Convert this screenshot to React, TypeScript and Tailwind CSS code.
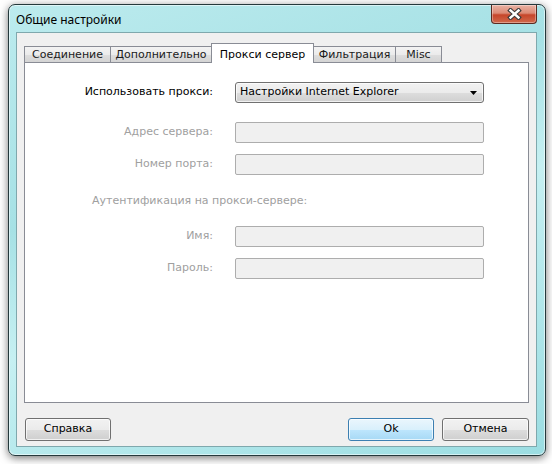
import React from 'react';

const body = { fontFamily: '"DejaVu Sans", Verdana, sans-serif' };

type TabDef = { label: string; w: string; active?: boolean };

const tabs: TabDef[] = [
  { label: 'Соединение', w: 'w-[87px]' },
  { label: 'Дополнительно', w: 'w-[102px]' },
  { label: 'Прокси сервер', w: 'w-[103px]', active: true },
  { label: 'Фильтрация', w: 'w-[83px]' },
  { label: 'Misc', w: 'w-[47px]' },
];

const CloseGlyph = () => (
  <svg width="15" height="12" viewBox="0 0 15 12">
    <path d="M3.5 2.5 L11.5 9.5 M11.5 2.5 L3.5 9.5" stroke="#3a3a3a" strokeWidth="4.6" strokeLinecap="square" />
    <path d="M3.5 2.5 L11.5 9.5 M11.5 2.5 L3.5 9.5" stroke="#ffffff" strokeWidth="2.4" strokeLinecap="square" />
  </svg>
);

const Field = ({ label }: { label: string }) => (
  <div className="flex items-center">
    <div className="w-[188px] text-right text-[#a0a0a0]">{label}</div>
    <div className="ml-[22px] w-[249px] h-[21px] rounded-[2px] border border-[#adadad] bg-[#f0f0f0]" />
  </div>
);

const Button = ({ label, primary }: { label: string; primary?: boolean }) => (
  <button
    className={`h-[23px] rounded-[3px] border text-[11px] text-black shadow-[inset_0_0_0_1px_rgba(255,255,255,0.7)] ${
      primary
        ? 'border-[#3c7fb1] bg-[linear-gradient(180deg,#eaf6fd_0%,#d9f0fc_50%,#bee6fd_51%,#a7d9f5_100%)]'
        : 'border-[#707070] bg-[linear-gradient(180deg,#f2f2f2_0%,#ebebeb_50%,#dddddd_51%,#cfcfcf_100%)]'
    }`}
    style={body}
  >
    {label}
  </button>
);

export default function App() {
  return (
    <div className="w-[552px] h-[464px] bg-white overflow-hidden pt-[4px] pl-[8px]" style={body}>
      <div className="w-[538px] h-[452px] rounded-[7px] border border-[#25393c] bg-[linear-gradient(160deg,#bcebee_0%,#a6e1e5_35%,#c6f0f2_55%,#9bdde2_100%)] shadow-[0_2px_9px_rgba(0,0,0,0.55),inset_0_0_0_1px_rgba(255,255,255,0.55)] flex flex-col">
        {/* title bar */}
        <div className="h-[27px] flex items-start pl-[7px] pr-[8px]">
          <div className="pt-[7px] text-[12px] leading-[16px] text-black" style={{ fontFamily: '"Noto Sans", sans-serif' }}>
            Общие настройки
          </div>
          <div className="ml-auto w-[46px] h-[19px] rounded-b-[4px] border border-t-0 border-[#5b2a20] bg-[linear-gradient(180deg,#e9b2a4_0%,#dc8a75_45%,#c6452a_55%,#d06a4c_100%)] shadow-[inset_0_0_0_1px_rgba(255,255,255,0.35)] flex items-center justify-center">
            <CloseGlyph />
          </div>
        </div>

        {/* client area */}
        <div className="ml-[7px] w-[521px] h-[415px] border border-[#7fa8ad] bg-[#f0f0f0] flex flex-col px-[7px] pt-[10px] text-[11px]">
          {/* tabs */}
          <div className="flex items-end h-[20px] -mb-px relative z-10">
            {tabs.map((t, i) =>
              t.active ? (
                <div
                  key={t.label}
                  className={`${t.w} -ml-px h-[20px] border border-b-0 border-[#898c95] bg-white text-black flex items-start justify-center pt-[3px] relative z-10`}
                >
                  {t.label}
                </div>
              ) : (
                <div
                  key={t.label}
                  className={`${t.w} ${i === 0 ? '' : '-ml-px'} h-[16px] mb-px border border-b-0 border-[#898c95] bg-[linear-gradient(180deg,#f3f3f3_0%,#ebebeb_50%,#dedede_51%,#d4d4d4_100%)] text-[#1a1a1a] flex items-center justify-center pt-px`}
                >
                  {t.label}
                </div>
              )
            )}
          </div>

          {/* panel */}
          <div className="h-[341px] border border-[#898c95] bg-white flex flex-col pt-[19px]">
            <div className="flex items-center">
              <div className="w-[188px] text-right text-black">Использовать прокси:</div>
              <div className="ml-[22px] w-[249px] h-[21px] rounded-[3px] border border-[#707070] bg-[linear-gradient(180deg,#f2f2f2_0%,#ebebeb_50%,#dddddd_51%,#cfcfcf_100%)] shadow-[inset_0_0_0_1px_rgba(255,255,255,0.7)] flex items-center pl-[4px] pr-[6px] text-black">
                <span>Настройки Internet Explorer</span>
                <svg className="ml-auto" width="7" height="4" viewBox="0 0 7 4">
                  <path d="M0 0 H7 L3.5 4 Z" fill="#000" />
                </svg>
              </div>
            </div>

            <div className="mt-[19px] flex flex-col gap-[11px]">
              <Field label="Адрес сервера:" />
              <Field label="Номер порта:" />
            </div>

            <div className="mt-[19px] pl-[67px] leading-[14px] text-[#a0a0a0]">Аутентификация на прокси-сервере:</div>

            <div className="mt-[18px] flex flex-col gap-[11px]">
              <Field label="Имя:" />
              <Field label="Пароль:" />
            </div>
          </div>

          {/* buttons */}
          <div className="mt-[15px] flex pl-[1px]">
            <div className="w-[86px] flex flex-col">
              <Button label="Справка" />
            </div>
            <div className="ml-auto flex gap-[8px]">
              <div className="w-[86px] flex flex-col">
                <Button label="Ok" primary />
              </div>
              <div className="w-[87px] flex flex-col">
                <Button label="Отмена" />
              </div>
            </div>
          </div>
        </div>
      </div>
    </div>
  );
}
